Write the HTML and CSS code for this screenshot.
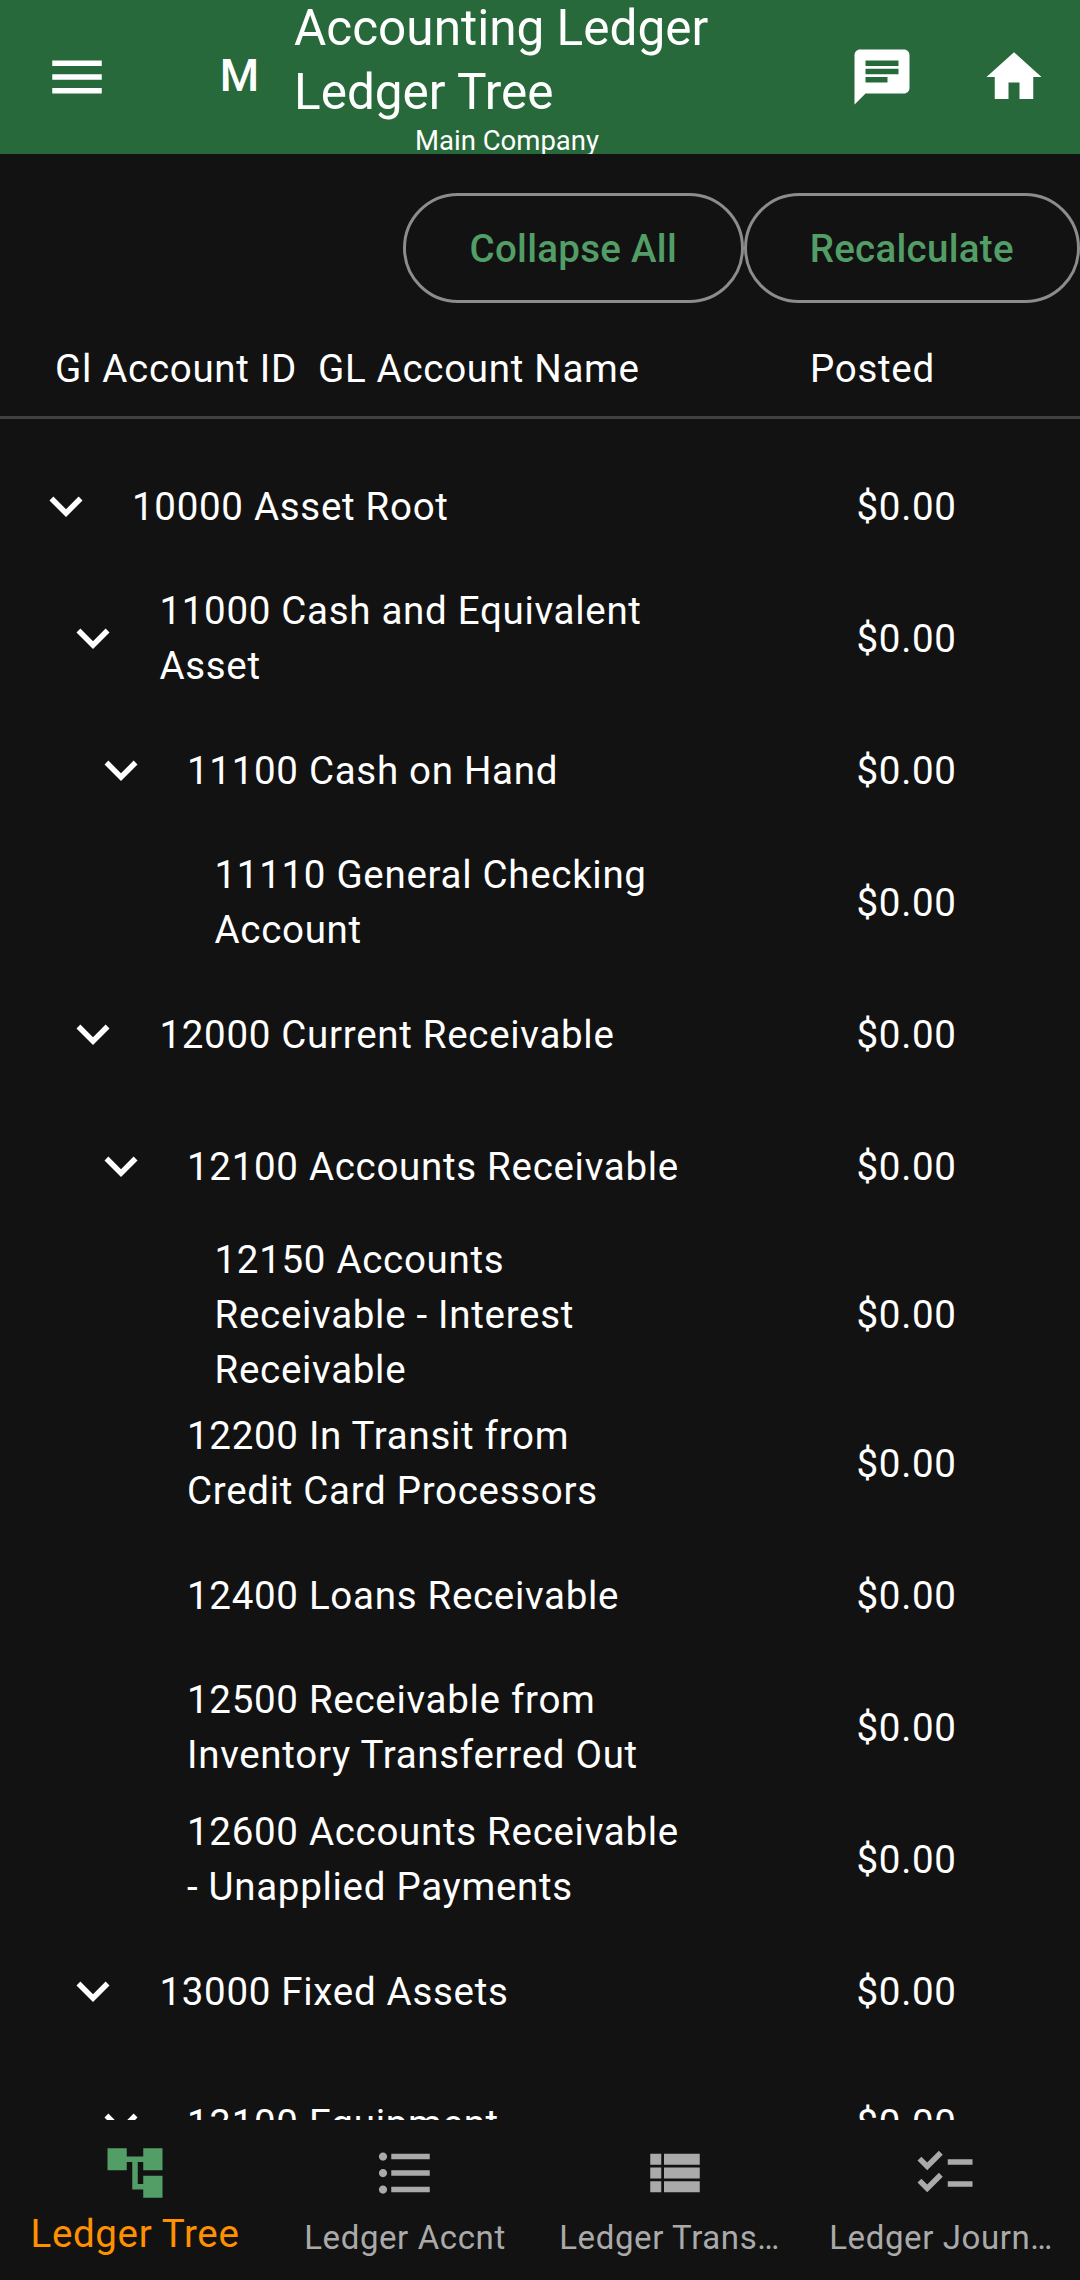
FILE: index.html
```html
<!DOCTYPE html>
<html lang="en">
<head>
<meta charset="utf-8">
<title>Accounting Ledger</title>
<link rel="stylesheet" href="styles.css">
</head>
<body>
<svg class="defs" width="0" height="0">
  <symbol id="chevron" viewBox="0 0 24 24"><path d="M16.59 8.59L12 13.17 7.41 8.59 6 10l6 6 6-6z"/></symbol>
</svg>
<div class="app">
  <header class="bar">
    <svg class="icon" viewBox="0 0 24 24"><path d="M3 18h18v-2H3v2zm0-5h18v-2H3v2zm0-7v2h18V6H3z"/></svg>
    <div class="avatar">M</div>
    <div class="titles">
      <h1 class="title">Accounting Ledger<br>Ledger Tree</h1>
      <div class="company">Main Company</div>
    </div>
    <div class="actions">
      <svg class="icon" viewBox="0 0 24 24"><path d="M20 2H4c-1.1 0-1.99.9-1.99 2L2 22l4-4h14c1.1 0 2-.9 2-2V4c0-1.1-.9-2-2-2zm-6 12H6v-2h8v2zm4-3H6V9h12v2zm0-3H6V6h12v2z"/></svg>
      <svg class="icon" viewBox="0 0 24 24"><path d="M10 20v-6h4v6h5v-8h3L12 3 2 12h3v8z"/></svg>
    </div>
  </header>

  <main class="content">
    <div class="buttons">
      <button class="btn btn-collapse">Collapse All</button>
      <button class="btn btn-recalc">Recalculate</button>
    </div>
    <div class="thead">
      <span class="col-id">Gl Account ID</span>
      <span class="col-name">GL Account Name</span>
      <span>Posted</span>
    </div>
    <div class="tree">
      <div class="row l0"><svg class="icon"><use href="#chevron"/></svg><span class="name">10000 Asset Root</span><span class="amount">$0.00</span></div>
      <div class="row l1"><svg class="icon"><use href="#chevron"/></svg><span class="name">11000 Cash and Equivalent Asset</span><span class="amount">$0.00</span></div>
      <div class="row l2"><svg class="icon"><use href="#chevron"/></svg><span class="name">11100 Cash on Hand</span><span class="amount">$0.00</span></div>
      <div class="row l3"><span class="icon"></span><span class="name">11110 General Checking Account</span><span class="amount">$0.00</span></div>
      <div class="row l1"><svg class="icon"><use href="#chevron"/></svg><span class="name">12000 Current Receivable</span><span class="amount">$0.00</span></div>
      <div class="row l2"><svg class="icon"><use href="#chevron"/></svg><span class="name">12100 Accounts Receivable</span><span class="amount">$0.00</span></div>
      <div class="row l3"><span class="icon"></span><span class="name">12150 Accounts Receivable - Interest Receivable</span><span class="amount">$0.00</span></div>
      <div class="row l2"><span class="icon"></span><span class="name">12200 In Transit from<br>Credit Card Processors</span><span class="amount">$0.00</span></div>
      <div class="row l2"><span class="icon"></span><span class="name">12400 Loans Receivable</span><span class="amount">$0.00</span></div>
      <div class="row l2"><span class="icon"></span><span class="name">12500 Receivable from Inventory Transferred Out</span><span class="amount">$0.00</span></div>
      <div class="row l2"><span class="icon"></span><span class="name">12600 Accounts Receivable - Unapplied Payments</span><span class="amount">$0.00</span></div>
      <div class="row l1"><svg class="icon"><use href="#chevron"/></svg><span class="name">13000 Fixed Assets</span><span class="amount">$0.00</span></div>
      <div class="row l2"><svg class="icon"><use href="#chevron"/></svg><span class="name">13100 Equipment</span><span class="amount">$0.00</span></div>
    </div>
  </main>

  <nav class="nav">
    <a class="tab active">
      <svg class="icon" viewBox="0 0 24 24"><path d="M22 11V3h-7v3H9V3H2v8h7V8h2v10h4v3h7v-8h-7v3h-2V8h2v3z"/></svg>
      <span class="label">Ledger Tree</span>
    </a>
    <a class="tab">
      <svg class="icon" viewBox="0 0 24 24"><path d="M4 10.5c-.83 0-1.5.67-1.5 1.5s.67 1.5 1.5 1.5 1.5-.67 1.5-1.5-.67-1.5-1.5-1.5zm0-6c-.83 0-1.5.67-1.5 1.5S3.170 7.500 4 7.500 5.500 6.830 5.500 6 4.830 4.500 4 4.500zm0 12c-.83 0-1.5.68-1.5 1.5s.68 1.5 1.5 1.5 1.5-.68 1.5-1.5-.67-1.5-1.5-1.5zM7 19h14v-2H7v2zm0-6h14v-2H7v2zm0-8v2h14V5H7z"/></svg>
      <span class="label">Ledger Accnt</span>
    </a>
    <a class="tab">
      <svg class="icon" viewBox="0 0 24 24"><path d="M3 14h4v-4H3v4zm0 5h4v-4H3v4zM3 9h4V5H3v4zm5 5h13v-4H8v4zm0 5h13v-4H8v4zM8 5v4h13V5H8z"/></svg>
      <span class="label clipped">Ledger Trans…</span>
    </a>
    <a class="tab">
      <svg class="icon" viewBox="0 0 24 24"><path d="M22 7h-9v2h9V7zm0 8h-9v2h9v-2zM5.540 11L2 7.460l1.410-1.410 2.120 2.120 4.240-4.240 1.410 1.410L5.540 11zm0 8L2 15.460l1.410-1.410 2.120 2.120 4.240-4.240 1.410 1.410L5.540 19z"/></svg>
      <span class="label clipped">Ledger Journ…</span>
    </a>
  </nav>
</div>
</body>
</html>
```

FILE: styles.css
```css
* { box-sizing: border-box; }

body {
  margin: 0;
  background: #121212;
  color: #fff;
  font-family: Roboto, "Liberation Sans", sans-serif;
  font-size: 38.5px;
  line-height: 55px;
  letter-spacing: 0.7px;
}

.defs { display: block; }

.app {
  display: flex;
  flex-direction: column;
  width: 1080px;
  height: 2280px;
  overflow: hidden;
}

.icon {
  display: block;
  flex: none;
  width: 66px;
  height: 66px;
  fill: currentColor;
}

.bar {
  flex: none;
  display: flex;
  align-items: center;
  height: 154px;
  padding: 0 33px 0 44px;
  background: #27693a;
  overflow: hidden;
}

.avatar {
  width: 110px;
  margin: -4px 0 0 74px;
  padding-left: 1px;
  text-align: center;
  font-size: 45px;
  font-weight: 500;
  letter-spacing: 0;
}

.titles {
  display: flex;
  flex-direction: column;
  align-items: center;
  width: 426px;
  height: 154px;
}

.title {
  width: 100%;
  margin: -4px 0 0;
  font-size: 49.5px;
  font-weight: 400;
  line-height: 64px;
  letter-spacing: 0;
}

.company {
  margin-top: -1px;
  font-size: 27.5px;
  line-height: 36px;
  letter-spacing: 0;
}

.actions {
  display: flex;
  gap: 66px;
  margin-left: auto;
}

.content {
  flex: 1;
  min-height: 0;
  overflow: hidden;
}

.buttons {
  display: flex;
  justify-content: flex-end;
  padding-top: 39px;
}

.btn {
  height: 110px;
  padding: 0;
  border: 3px solid #8c8c8c;
  border-radius: 55px;
  background: none;
  color: #529e66;
  font: inherit;
  font-weight: 500;
  letter-spacing: 0.275px;
}

.btn-collapse { width: 340.5px; }
.btn-recalc { width: 336.5px; }

.thead {
  display: grid;
  grid-template-columns: 263px 492px 1fr;
  height: 116px;
  padding: 38px 0 0 55px;
  border-bottom: 3px solid #404040;
}

.tree { padding-top: 21px; }

.row {
  display: grid;
  grid-template-columns: 66px 1fr 223.5px;
  column-gap: 33px;
  align-items: center;
  min-height: 132px;
}

.row .name { padding-right: 141px; }

.l0 { padding-left: 33px; }
.l1 { padding-left: 60.4px; }
.l2 { padding-left: 88px; }
.l3 { padding-left: 115.5px; }

.nav {
  flex: none;
  display: grid;
  grid-template-columns: repeat(4, 270px);
  height: 160px;
}

.tab {
  display: flex;
  flex-direction: column;
  align-items: center;
  padding-top: 20px;
  color: #aaa;
}

.label {
  margin-top: 4px;
  font-size: 33px;
  line-height: 55px;
  letter-spacing: 0.6px;
  white-space: nowrap;
}

.clipped {
  align-self: stretch;
  padding-left: 19.25px;
}

.active { color: #529e66; }

.active .label {
  margin-top: 0;
  color: #ff9000;
  font-size: 38.5px;
  letter-spacing: 0.65px;
}
```
